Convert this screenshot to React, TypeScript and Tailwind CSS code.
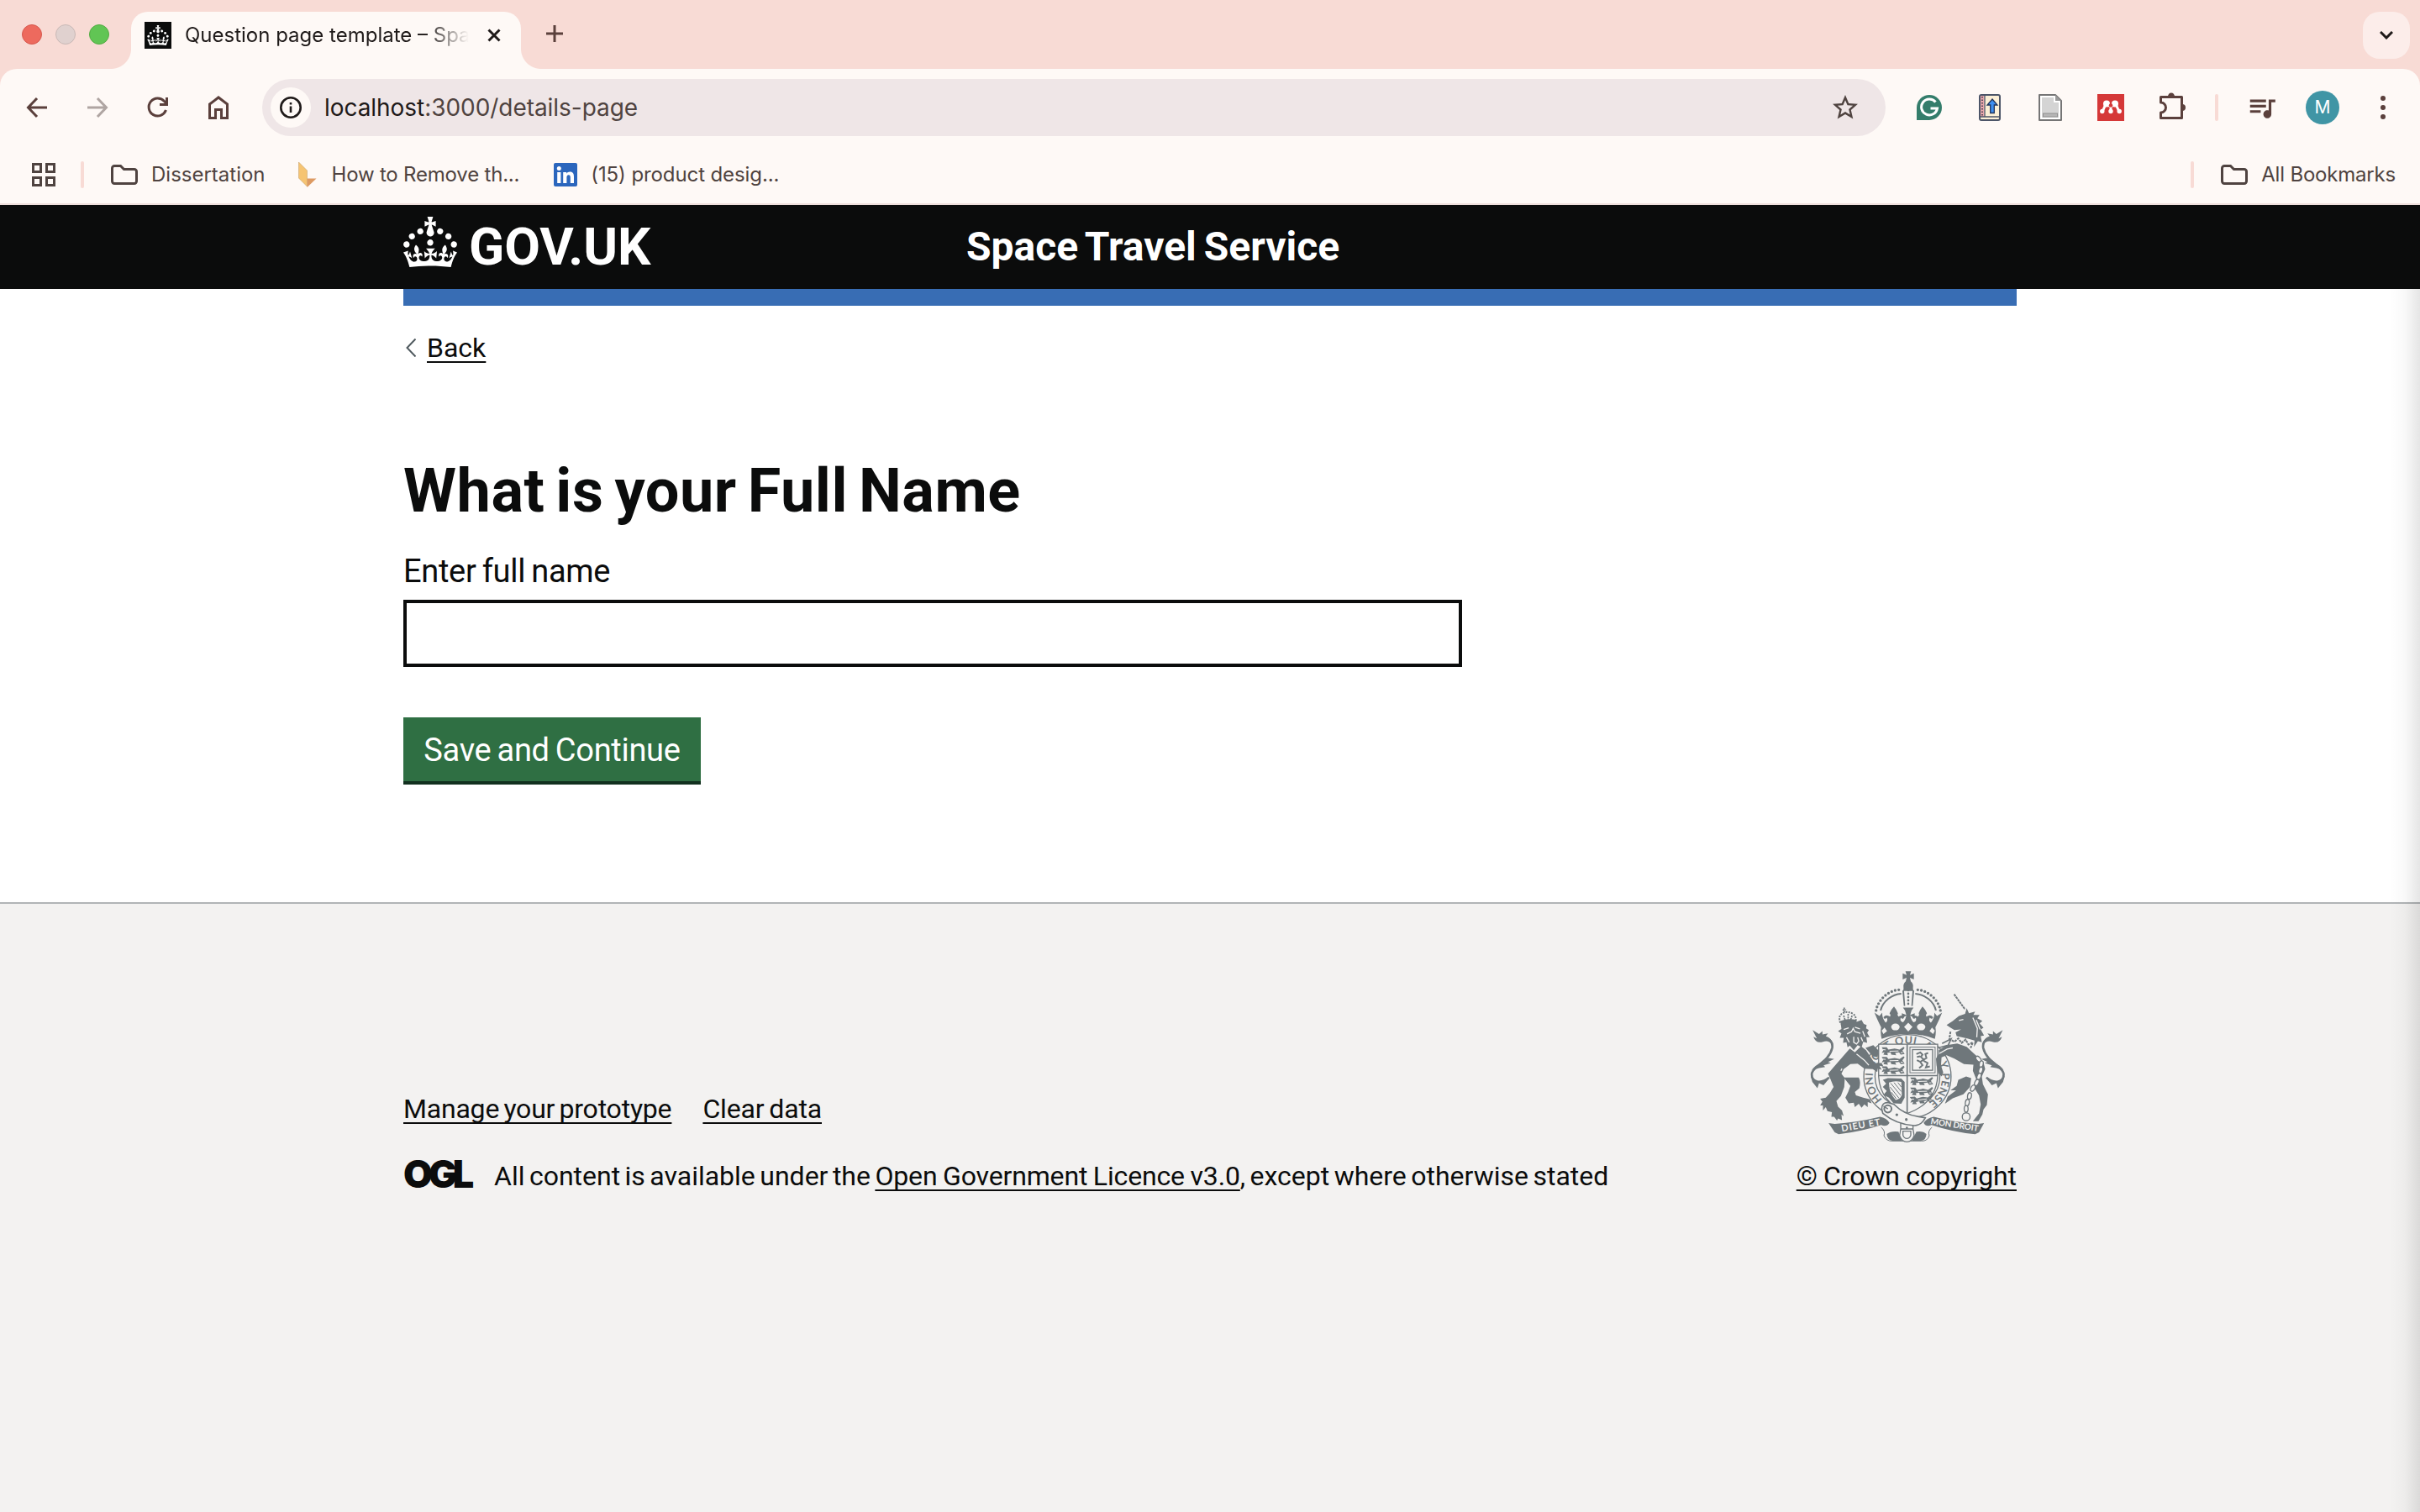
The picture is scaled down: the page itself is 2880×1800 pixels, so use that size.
import React from "react";
import { MdStarOutline, MdQueueMusic } from "react-icons/md";

const CROWN =
  "M22.6 10.4c-1 .4-2-.1-2.4-1-.4-.9.1-2 1-2.4.9-.4 2 .1 2.4 1s-.1 2-1 2.4m-5.9 6.7c-.9.4-2-.1-2.4-1-.4-.9.1-2 1-2.4.9-.4 2 .1 2.4 1s-.1 2-1 2.4m10.8-3.7c-1 .4-2-.1-2.4-1-.4-.9.1-2 1-2.4.9-.4 2 .1 2.4 1s0 2-1 2.4m3.3 4.8c-1 .4-2-.1-2.4-1-.4-.9.1-2 1-2.4.9-.4 2 .1 2.4 1s-.1 2-1 2.4M17 4.7l2.3 1.2V2.5l-2.3.7-.2-.2.9-3h-3.4l.9 3-.2.2c-.1.1-2.3-.7-2.3-.7v3.4L15 4.7c.1.1.1.2.2.2l-1.3 4c-.1.2-.1.4-.1.6 0 1.1.8 2 1.9 2.2h.7c1-.2 1.9-1.1 1.9-2.1 0-.2 0-.4-.1-.6l-1.3-4c-.1-.2 0-.2.1-.3m-7.6 5.7c.9.4 2-.1 2.4-1 .4-.9-.1-2-1-2.4-.9-.4-2 .1-2.4 1s0 2 1 2.4m-5 3c.9.4 2-.1 2.4-1 .4-.9-.1-2-1-2.4-.9-.4-2 .1-2.4 1s.1 2 1 2.4m-3.2 4.8c.9.4 2-.1 2.4-1 .4-.9-.1-2-1-2.4-.9-.4-2 .1-2.4 1s0 2 1 2.4m14.8 11c4.4 0 8.6.3 12.3.8 1.1-4.5 2.4-7 3.7-8.8l-2.5-.9c.2 1.3.3 1.9 0 2.7-.4-.4-.8-1.1-1.1-2.3l-1.2 4c.7-.5 1.3-.8 2-.9-1.1 2.5-2.6 3.1-3.5 3-1.1-.2-1.7-1.2-1.5-2.1.3-1.2 1.5-1.5 2.1-.1 1.1-2.3-.8-3-2-2.3 1.9-1.9 2.1-3.5.6-5.6-2.1 1.6-2.1 3.2-1.2 5.5-1.2-1.4-3.2-.6-2.5 1.6.9-1.4 2.1-.5 1.9.8-.2 1.1-1.7 2.1-3.5 1.9-2.7-.2-2.9-2.1-2.9-3.6.7-.1 1.9.5 2.9 1.9l.4-4.3c-1.1 1.1-2.1 1.4-3.2 1.4.4-1.2 2.1-3 2.1-3h-5.4s1.7 1.9 2.1 3c-1.1 0-2.1-.2-3.2-1.4l.4 4.3c1-1.4 2.2-2 2.9-1.9-.1 1.5-.2 3.4-2.9 3.6-1.9.2-3.4-.8-3.5-1.9-.2-1.3 1-2.2 1.9-.8.7-2.3-1.2-3-2.5-1.6.9-2.2.9-3.9-1.2-5.5-1.5 2-1.3 3.7.6 5.6-1.2-.7-3.1 0-2 2.3.6-1.4 1.8-1.1 2.1.1.2.9-.3 1.9-1.5 2.1-.9.2-2.4-.5-3.5-3 .6 0 1.2.3 2 .9l-1.2-4c-.3 1.1-.7 1.9-1.1 2.3-.3-.8-.2-1.4 0-2.7l-2.9.9C1.3 23 2.6 25.5 3.7 30c3.7-.5 7.9-.8 12.3-.8";

function Crown({ className }: { className: string }) {
  return (
    <svg viewBox="0 0 32 30" fill="currentColor" className={className} aria-hidden="true">
      <path d={CROWN} />
    </svg>
  );
}

function LineIcon({ d, className = "" }: { d: string; className?: string }) {
  return (
    <svg viewBox="0 0 40 40" fill="none" stroke="currentColor" strokeWidth="3" className={`size-10 shrink-0 ${className}`} aria-hidden="true">
      <path d={d} />
    </svg>
  );
}

function Folder() {
  return (
    <svg viewBox="0 0 32 24" fill="none" stroke="currentColor" strokeWidth="3" className="h-6 w-8 shrink-0" aria-hidden="true">
      <path d="M1.5 4.2a2.7 2.7 0 0 1 2.7-2.7H11.500l4 4H27.800a2.700 2.700 0 0 1 2.700 2.700V19.800a2.700 2.700 0 0 1-2.700 2.700H4.200a2.700 2.700 0 0 1-2.700-2.700Z" />
    </svg>
  );
}

function TabStrip() {
  return (
    <div className="flex h-[82px] items-start bg-[#f8dbd5]">
      <div className="ml-[26px] mt-[29px] flex gap-4">
        <span className="size-6 rounded-full border border-[#d6584e] bg-[#ed6a5e]" />
        <span className="size-6 rounded-full border border-[#c9b9b6] bg-[#e0d1cf]" />
        <span className="size-6 rounded-full border border-[#53ab43] bg-[#61c554]" />
      </div>
      <div className="relative ml-[26px] mt-[14px] flex h-[68px] w-[464px] items-start rounded-t-[20px] bg-[#fef9f6] text-[#1f1a19]">
        <span className="absolute -left-6 bottom-0 size-6 bg-[radial-gradient(circle_at_0_0,transparent_23.5px,#fef9f6_24.5px)]" />
        <span className="absolute -right-6 bottom-0 size-6 bg-[radial-gradient(circle_at_100%_0,transparent_23.5px,#fef9f6_24.5px)]" />
        <span className="ml-4 mt-3 flex size-8 shrink-0 items-center justify-center bg-[#0b0c0c] text-white">
          <Crown className="h-6 w-[26px]" />
        </span>
        <span className="ml-4 h-14 w-[344px] shrink-0 whitespace-nowrap text-[24px] leading-[55px] [mask-image:linear-gradient(to_right,#000_286px,transparent_338px)]">
          Question page template – Spa
        </span>
        <svg viewBox="0 0 16 16" fill="none" stroke="currentColor" strokeWidth="3" className="ml-4 mt-5 size-4 shrink-0" aria-hidden="true">
          <path d="M1.500 1.500L14.500 14.500M14.500 1.500L1.500 14.500" />
        </svg>
      </div>
      <svg viewBox="0 0 20 20" fill="none" stroke="#5b403c" strokeWidth="3" className="ml-[30px] mt-[30px] size-5" aria-hidden="true">
        <path d="M10 0V20M0 10H20" />
      </svg>
      <span className="ml-auto mr-3 mt-[14px] flex h-14 w-14 items-center justify-center rounded-[20px] bg-[#fcedea]">
        <svg viewBox="0 0 16 10" fill="none" stroke="#1f1a19" strokeWidth="3" className="h-[10px] w-4" aria-hidden="true">
          <path d="M1 1L8 8L15 1" />
        </svg>
      </span>
    </div>
  );
}

function Extensions() {
  return (
    <>
      <svg viewBox="0 0 30 30" className="ml-[37px] size-[30px] shrink-0" aria-hidden="true">
        <path d="M0 30V15A15 15 0 1 1 15 30Z" fill="#347d6b" />
        <path d="M22.500 8.500A9.500 9.500 0 1 0 24.500 16H16.500" fill="none" stroke="#fff" strokeWidth="3" />
      </svg>
      <svg viewBox="0 0 26 32" className="ml-[44px] h-8 w-[26px] shrink-0" aria-hidden="true">
        <rect x="1" y="1" width="24" height="30" rx="2" fill="#fbefd6" stroke="#4c5568" strokeWidth="2" />
        <rect x="2" y="2" width="4.500" height="25" fill="#eaa9ad" />
        <path d="M4 3V27" stroke="#5b4a5c" strokeWidth="2" strokeDasharray="1.500 2" />
        <path d="M1 27H25M7 2V27" stroke="#4c5568" strokeWidth="1.300" />
        <path d="M16 6L22 13H18.300V22.500H13.700V13H10Z" fill="#3f8ff0" stroke="#22345a" strokeWidth="1.300" />
      </svg>
      <svg viewBox="0 0 28 32" className="ml-[45px] h-8 w-7 shrink-0" aria-hidden="true">
        <path d="M1 1H20L27 8V31H1Z" fill="#fff" stroke="#757575" strokeWidth="2" strokeLinejoin="round" />
        <path d="M4 4H18V10H24V28H4Z" fill="#d4d4d4" />
        <path d="M20 1V8H27Z" fill="#9a9a9a" />
        <rect x="5.500" y="23" width="17" height="4" fill="#b5b5b5" stroke="#929292" />
      </svg>
      <svg viewBox="0 0 32 32" className="ml-[42px] size-8 shrink-0" aria-hidden="true">
        <rect width="32" height="32" fill="#d53838" />
        <path d="M5.500 20.500C8.500 19 7.500 14 11 12L16 15L21 12C24.500 14 23.500 19 26.500 20.500M16 14V20" fill="none" stroke="#fff" strokeWidth="3" />
        <g fill="#fff">
          <circle cx="11" cy="11.500" r="4" />
          <circle cx="21" cy="11.500" r="4" />
          <circle cx="5.800" cy="20.500" r="2.700" />
          <circle cx="16" cy="20.500" r="2.700" />
          <circle cx="26.200" cy="20.500" r="2.700" />
        </g>
        <circle cx="16" cy="13.500" r="2.300" fill="#d53838" />
      </svg>
      <svg viewBox="0 0 32 32" fill="none" stroke="currentColor" strokeWidth="3" strokeLinejoin="round" className="mb-1 ml-[42px] size-8 shrink-0" aria-hidden="true">
        <path d="M1.500 5.500H26.500V30.500H1.500V24a6 6 0 0 0 0-12Z" />
        <path d="M10 5a4 4.500 0 0 1 8 0ZM27 14a4 4 0 0 1 0 8Z" fill="currentColor" stroke="none" />
      </svg>
    </>
  );
}

function Toolbar() {
  return (
    <div className="bg-[#f8dbd5]">
      <div className="flex h-[92px] items-center rounded-t-[20px] bg-[#fef9f6] text-[#5b403c]">
        <LineIcon d="M32 20H9M20 9L9.500 20L20 31" className="ml-6" />
        <LineIcon d="M8 20H31M20 9L30.500 20L20 31" className="ml-8 text-[#afa5a2]" />
        <LineIcon d="M29.500 23A10.500 10.500 0 1 1 27.500 12.500L30 15M30.500 8V16.500H22" className="ml-8" />
        <LineIcon d="M9.500 32.500V16L20 8L30.500 16V32.500H23.500V22.500H16.500V32.500Z" className="ml-8" />
        <div className="ml-8 flex h-[68px] w-[1932px] items-center rounded-full bg-[#efe6e7] text-[#1f1a19]">
          <span className="ml-[10px] flex size-12 items-center justify-center rounded-full bg-[#fef9f6]">
            <svg viewBox="0 0 26 26" fill="none" stroke="currentColor" strokeWidth="2.600" className="size-[26px]" aria-hidden="true">
              <circle cx="13" cy="13" r="11.700" />
              <path d="M13 11.500V19M13 7V9.600" />
            </svg>
          </span>
          <span className="ml-4 text-[28px] leading-10 tracking-[-0.05px]">
            localhost<span className="text-[#4f4340]">:3000/details-page</span>
          </span>
          <MdStarOutline className="ml-auto mr-[30px] size-9 text-[#4f4340]" />
        </div>
        <Extensions />
        <span className="ml-[34px] h-8 w-1 rounded-full bg-[#f8dbd5]" />
        <MdQueueMusic className="ml-[33px] size-[38px] shrink-0" />
        <span className="ml-[33px] flex size-10 items-center justify-center rounded-full bg-[#4095a5] text-[21px] text-white">M</span>
        <span className="ml-[49px] flex flex-col gap-[5px]">
          <i className="size-[6px] rounded-full bg-current" />
          <i className="size-[6px] rounded-full bg-current" />
          <i className="size-[6px] rounded-full bg-current" />
        </span>
      </div>
    </div>
  );
}

function Bookmarks() {
  return (
    <div className="flex h-[70px] items-center whitespace-nowrap border-b-2 border-[#efdfdc] bg-[#fef9f6] text-[24px] leading-8 text-[#4f4340]">
      <svg viewBox="0 0 28 28" fill="none" stroke="currentColor" strokeWidth="3" className="ml-[38px] size-7" aria-hidden="true">
        <path d="M1.500 1.500H10.500V10.500H1.500ZM17.500 1.500H26.500V10.500H17.500ZM1.500 17.500H10.500V26.500H1.500ZM17.500 17.500H26.500V26.500H17.500Z" />
      </svg>
      <span className="ml-[30px] h-8 w-1 rounded-full bg-[#f8dbd5]" />
      <span className="ml-8 flex items-center gap-4">
        <Folder />
        Dissertation
      </span>
      <span className="ml-[39px] flex items-center gap-[18px] tracking-[-0.2px]">
        <svg viewBox="0 0 22 30" className="h-[30px] w-[22px]" aria-hidden="true">
          <path d="M0.500 0L10.500 10V29L0.500 19Z" fill="#f6c472" stroke="#c7a36a" strokeWidth="0.600" />
          <path d="M10.500 19.500H21.500L10.500 30Z" fill="#dd9a62" />
        </svg>
        How to Remove th...
      </span>
      <span className="ml-[41px] flex items-center gap-4 tracking-[-0.1px]">
        <svg viewBox="0 0 28 28" className="size-7" aria-hidden="true">
          <rect width="28" height="28" rx="2" fill="#2b66bd" />
          <circle cx="6.300" cy="6.500" r="2.500" fill="#fff" />
          <path d="M4.200 11H8.400V24H4.200ZM11.200 11H15.200V12.800C16 11.400 17.500 10.600 19.300 10.600C23 10.600 24 13 24 16.600V24H19.800V17.400C19.800 15.600 19.500 14.200 17.700 14.200C15.900 14.200 15.400 15.600 15.400 17.300V24H11.200Z" fill="#fff" />
        </svg>
        (15) product desig...
      </span>
      <span className="ml-auto h-8 w-1 rounded-full bg-[#f8dbd5]" />
      <span className="ml-8 mr-[29px] flex items-center gap-4 tracking-[-0.2px]">
        <Folder />
        All Bookmarks
      </span>
    </div>
  );
}

/* Everything in the crown is symmetrical, so only the left half is described. */
function CrestCrownHalf() {
  return (
    <g>
      <path d="M453 48H443L447 61L433 55V77L447 71L444 84Q434 92 436 106Q438 114 432 118L437 172H442L438 118H453Z" />
      <path d="M338 188C344 150 385 113 424 114" fill="none" stroke="#6f777b" strokeWidth="10" strokeLinecap="round" strokeDasharray="0 13" />
      <path d="M354 188C362 155 395 130 428 128" fill="none" stroke="#6f777b" strokeWidth="6" />
      <path d="M332 196L350 208L360 196Q358 214 372 232Q382 226 376 214Q368 222 364 212Q374 200 388 210Q392 204 386 198Q392 184 402 174Q412 186 416 198Q412 204 418 210Q434 202 438 212Q434 222 426 214Q422 228 434 230Q442 224 446 206L430 216V198L446 204Q444 188 434 178H453V272Q400 272 358 290Q352 266 356 248Q346 230 332 196Z" />
      <ellipse cx="407" cy="247" rx="15" ry="12" fill="#f3f2f1" />
      <path d="M368 249L358 260L364 272L377 262Z" fill="#f3f2f1" />
    </g>
  );
}

function TailAndFlourish() {
  return (
    <g>
      <path d="M170 428C140 452 106 446 108 414C112 386 170 372 181 322C184 300 172 288 156 292" fill="none" stroke="#6f777b" strokeWidth="8" />
      <path d="M111 258L134 272L146 262V274L166 270L158 280Q180 286 184 312Q168 292 148 300Q122 308 114 282L126 288Z" />
      <path d="M188 362L168 358L148 368L152 374Q120 380 108 402L134 394L156 390L150 384L176 376L166 372Z" />
      <path d="M104 420L110 444L128 466L134 448L150 456L168 434L140 444Q118 440 104 420Z" />
    </g>
  );
}

const LIONS_PASSANT: [number, number, number][] = [
  [356, 334, 0], [356, 368, 0], [356, 402, 0],
  [458, 442, 0], [458, 478, 0], [458, 512, -6],
];

const CHAIN: [number, number, number][] = [
  [704, 362, 50], [714, 380, 100], [712, 402, 105], [706, 424, 110],
  [698, 446, 115], [684, 466, 120], [672, 494, 100], [664, 518, 100], [660, 540, 90],
];

/* Words of the garter motto and the angle, clockwise from the bottom, where each starts. */
const MOTTO: [string, number][] = [
  ["HONI", 47], ["SO", 106], ["T", 142], ["QUI", 160], ["A", 207], ["Y", 246], ["PENSE", 264],
];

function RoyalArms() {
  return (
    <svg viewBox="102 47 696 613" fill="#6f777b" className="h-[204px] w-[232px]" aria-hidden="true">
      <TailAndFlourish />
      <g transform="translate(902 0) scale(-1 1)">
        <TailAndFlourish />
      </g>

      {/* garter and motto */}
      <ellipse cx="450" cy="424" rx="156" ry="150" fill="#f3f2f1" stroke="#6f777b" strokeWidth="4" />
      <ellipse cx="450" cy="424" rx="116" ry="112" fill="none" stroke="#6f777b" strokeWidth="4" />
      <path id="garter" d="M450 543A124 118 0 1 1 450.100 543" fill="none" pathLength="360" />
      {MOTTO.map(([word, angle]) => (
        <text key={word} fontSize="38" fontFamily="Lato" fontWeight="700" letterSpacing="1">
          <textPath href="#garter" startOffset={angle}>{word}</textPath>
        </text>
      ))}

      {/* shield */}
      <path d="M347 309H558V424Q552 520 450 556Q352 516 347 424Z" fill="#f3f2f1" stroke="#6f777b" strokeWidth="4" />
      <path d="M449 309V556M347 421H558" stroke="#6f777b" strokeWidth="5" />
      {LIONS_PASSANT.map(([x, y, r]) => (
        <g key={`${x}-${y}`} transform={`translate(${x} ${y}) rotate(${r})`}>
          <path d="M2 -14H20L26 -6L48 -10L66 -6L80 -16L84 -12L76 -2L84 10L70 12L64 4L50 6L54 14L36 12L34 4L22 6L24 14L8 12L12 4L2 6L8 -4Z" />
          <path d="M6 -6L16 -5M30 0L62 -1M70 5L78 5" stroke="#f3f2f1" strokeWidth="3" />
        </g>
      ))}
      <rect x="459" y="319" width="90" height="92" fill="none" stroke="#6f777b" strokeWidth="3" />
      <rect x="468" y="328" width="72" height="74" fill="none" stroke="#6f777b" strokeWidth="4" />
      <path d="M482 344L496 338L504 346L498 354L508 364L518 358L514 344L524 340M508 364L496 372L484 366M496 372L504 384L492 394M508 368L522 376L516 392L530 388M484 354L496 352" fill="none" stroke="#6f777b" strokeWidth="6" />
      <path d="M362 436L380 430L428 432L440 444V500L428 522L400 520L384 500L364 490L376 476L362 462L374 450Z" />
      <path d="M384 446Q404 438 428 444L430 490Q424 506 408 508Q384 484 384 446Z" fill="#f3f2f1" />
      <path d="M390 448L426 492M388 462L420 502M402 446L428 478M416 446L428 462M392 480L410 504" stroke="#6f777b" strokeWidth="3" />

      {/* crown */}
      <CrestCrownHalf />
      <g transform="translate(906 0) scale(-1 1)">
        <CrestCrownHalf />
      </g>
      <path d="M453 116V170" stroke="#6f777b" strokeWidth="8" strokeLinecap="round" strokeDasharray="0 12" />
      <path d="M453 232L468 247L453 263L438 247Z" fill="#f3f2f1" />

      {/* lion */}
      <path d="M210 232Q200 205 222 196Q238 190 256 200Q270 212 264 232" fill="none" stroke="#6f777b" strokeWidth="6" strokeDasharray="6 4" />
      <path d="M224 178V196M218 186H231M238 200V226M222 206L228 226M252 206L246 226" stroke="#6f777b" strokeWidth="5" strokeDasharray="7 3" />
      <path d="M210 226Q236 214 268 222L266 238L212 240Z" />
      <path d="M212 238Q236 222 270 228L286 222L294 236L304 240L302 252L312 258L306 268L315 284L303 284L306 304L292 300L286 320L272 312L258 330L244 314L236 320L232 302L220 304L222 286L208 286L214 270L202 262L214 254Z" />
      <path d="M222 256L240 250M262 248L280 254M234 272L250 264L256 252L262 264L282 270M258 282V302L268 308L276 298L272 284M232 284L242 302M290 262L298 282M284 284L290 298" fill="none" stroke="#f3f2f1" strokeWidth="4" />
      <path d="M244 324L262 338L284 316L302 330L318 354L332 376L358 376L364 388L350 386L358 400L344 396L342 408L326 398L296 396L272 378L246 380L222 398L214 414L226 430L224 462L212 494L196 512L202 532L216 546L222 566L214 560L216 580L202 574L198 582L188 568L178 568L180 552L164 548L158 534L148 546L148 528L138 528L146 514L138 504L158 500L172 484L186 462L174 432L166 414Z" />
      <path d="M300 322L328 312L346 330L344 356L326 352Z" />
      <path d="M222 428L276 428Q284 444 278 466L262 480L266 492L292 500L316 506L322 520L308 516L308 534L296 524L286 536L276 522L262 534L258 518L240 520L228 500L238 480L246 458Z" />
      <path d="M268 344L296 366L312 384M212 404L216 396" fill="none" stroke="#f3f2f1" strokeWidth="4" />

      {/* unicorn */}
      <path d="M617 130L656 184" stroke="#6f777b" strokeWidth="6" strokeDasharray="9 2" />
      <path d="M590 240L612 226L634 208L656 200L662 180L670 198L692 192L686 204L708 204L700 216L718 226L708 234L722 250L712 256L724 278L712 280L716 302L702 298L688 318L690 296L664 288L626 280L622 266L642 256L618 258L602 248Z" />
      <path d="M634 224L650 220M684 214L700 252L698 284M696 222L710 256" fill="none" stroke="#f3f2f1" strokeWidth="4" />
      <path d="M604 264L600 290L618 300L632 288L644 304L658 292L668 310L684 302L676 322" fill="none" stroke="#6f777b" strokeWidth="6" strokeDasharray="9 3" />
      <path d="M562 330L590 312L628 306L662 318L692 346L722 374L728 398L716 424L720 452L738 488L734 526L722 542L718 560L704 584L684 584L706 556L712 524L706 492L690 466L696 434L684 404L686 382L652 380L618 360L590 348L572 356L570 384L578 410L572 424L560 412L554 384L552 360L562 344Z" />
      <path d="M564 342L592 326L612 322" fill="none" stroke="#f3f2f1" strokeWidth="4" />
      <path d="M574 306L606 290L596 312L560 322" fill="none" stroke="#6f777b" strokeWidth="5" />
      <path d="M632 436L660 424L678 430L674 462L650 488L612 502L584 522L594 496L624 474L604 474L626 458Z" />
      {CHAIN.map(([x, y, r]) => (
        <ellipse key={`${x}-${y}`} cx={x} cy={y} rx="12" ry="7" fill="#f3f2f1" stroke="#6f777b" strokeWidth="4" transform={`rotate(${r} ${x} ${y})`} />
      ))}
      <circle cx="660" cy="568" r="14" fill="none" stroke="#6f777b" strokeWidth="4" />

      {/* scroll */}
      <path d="M168 591L190 594Q270 588 352 568Q376 572 386 590Q376 606 356 598Q284 622 204 631L190 624Z" />
      <path d="M724 591L704 594Q620 588 544 568Q520 572 508 590Q516 606 536 598Q614 624 692 631L706 624Z" />
      <path d="M356 606Q372 618 366 636Q374 656 396 655H500Q522 656 528 636Q522 618 538 606" fill="#f3f2f1" stroke="#6f777b" strokeWidth="3" />
      <path d="M376 630Q392 618 418 622L430 654H396Q378 652 376 630ZM518 630Q506 618 482 622L466 654H500Q516 652 518 630Z" />
      <text x="216" y="622" fontSize="33" fontFamily="Lato" fontWeight="700" fill="#f3f2f1" textLength="140" transform="rotate(-10 216 622)">DIEU ET</text>
      <text x="532" y="594" fontSize="30" fontFamily="Lato" fontWeight="700" fill="#f3f2f1" textLength="172" transform="rotate(9 532 594)">MON DROIT</text>

      {/* belt */}
      <path d="M426 580H470V612L474 636Q466 658 448 658Q430 658 422 636L426 612Z" fill="#f3f2f1" stroke="#6f777b" strokeWidth="4" />
      <path d="M434 620H462V634Q458 646 448 646Q438 646 434 634ZM426 612H470" fill="none" stroke="#6f777b" strokeWidth="4" />
      <path d="M358 540Q358 516 382 518L402 524Q440 562 490 568L514 572Q502 598 474 600Q410 596 362 556Z" fill="#f3f2f1" stroke="#6f777b" strokeWidth="5" />
      <circle cx="380" cy="540" r="13" fill="none" stroke="#6f777b" strokeWidth="6" />
      <path d="M380 540L364 530" stroke="#6f777b" strokeWidth="4" />
      <circle cx="412" cy="561" r="5" />
      <circle cx="446" cy="578" r="5" />
      <circle cx="448" cy="608" r="4" />
    </svg>
  );
}

const LINK = "underline decoration-2 underline-offset-[5px] [text-decoration-skip-ink:none]";

export default function App() {
  return (
    <div className="relative flex h-[1800px] w-[2880px] flex-col overflow-hidden bg-white font-['Inter',sans-serif]">
      <TabStrip />
      <Toolbar />
      <Bookmarks />

      <div className="flex grow flex-col font-['Roboto',sans-serif] text-[#0b0c0c]">
        <header className="bg-[#0b0c0c] text-white">
          <div className="mx-auto flex h-[100px] w-[1920px] items-center font-bold">
            <Crown className="mb-3 h-[60px] w-16" />
            <span className="ml-[14px] w-[577px] text-[62px] leading-[72px]">GOV.UK</span>
            <span className="ml-[15px] text-[48px] leading-[60px] [word-spacing:-3px]">Space Travel Service</span>
          </div>
        </header>
        <div className="mx-auto h-5 w-[1920px] shrink-0 bg-[#386db4]" />

        <main className="mx-auto h-[710px] w-[1920px] shrink-0 pt-[30px]">
          <a className="flex h-10 items-center text-[32px] leading-10">
            <svg viewBox="0 0 12 22" fill="none" stroke="#505a5f" strokeWidth="2" className="ml-[3px] mr-[13px] h-[22px] w-3" aria-hidden="true">
              <path d="M11.500 0.500L1.500 11L11.500 21.500" />
            </svg>
            <span className={LINK}>Back</span>
          </a>
          <h1 className="mt-[113px] text-[72px] font-bold leading-[76px] tracking-[0.55px] [word-spacing:-5.500px]">What is your Full Name</h1>
          <label className="mt-[33px] block text-[38px] leading-[48px] tracking-[-0.3px] [word-spacing:-2px]" htmlFor="full-name">
            Enter full name
          </label>
          <input id="full-name" className="mt-[10px] block h-20 w-[1260px] border-4 border-[#0b0c0c] bg-white px-2" />
          <button className="mt-[60px] block h-20 w-[354px] whitespace-nowrap border-b-4 border-[#12301f] bg-[#2f6f43] pt-[2px] text-[38px] leading-[74px] tracking-[-0.3px] text-white [word-spacing:-2px]">
            Save and Continue
          </button>
        </main>

        <footer className="grow border-t-2 border-[#b1b4b6] bg-[#f3f2f1] pt-20 text-[32px] leading-10">
          <div className="mx-auto flex w-[1920px] items-end justify-between">
            <div>
              <div className="flex gap-[37px] whitespace-nowrap">
                <a className={`${LINK} tracking-[-0.2px] [word-spacing:-2.500px]`}>Manage your prototype</a>
                <a className={`${LINK} tracking-[-0.15px] [word-spacing:-2px]`}>Clear data</a>
              </div>
              <div className="mt-10 flex h-10">
                <span className="w-[108px] font-['Inter',sans-serif] text-[45px] font-black leading-[35px] tracking-[-5px]">OGL</span>
                <p className="whitespace-nowrap [word-spacing:-2.500px]">
                  All content is available under the{" "}
                  <a className={`${LINK} tracking-[-0.15px] [word-spacing:-1.200px]`}>Open Government Licence v3.0</a>
                  , except where otherwise stated
                </p>
              </div>
            </div>
            <div className="flex flex-col items-end gap-5">
              <div className="mr-[14px]">
                <RoyalArms />
              </div>
              <a className={`${LINK} tracking-[-0.1px] [word-spacing:-0.500px]`}>© Crown copyright</a>
            </div>
          </div>
        </footer>
      </div>

      <div className="pointer-events-none absolute bottom-0 right-0 top-[344px] w-9 bg-linear-to-r from-transparent via-black/[0.025] to-black/10" />
    </div>
  );
}
